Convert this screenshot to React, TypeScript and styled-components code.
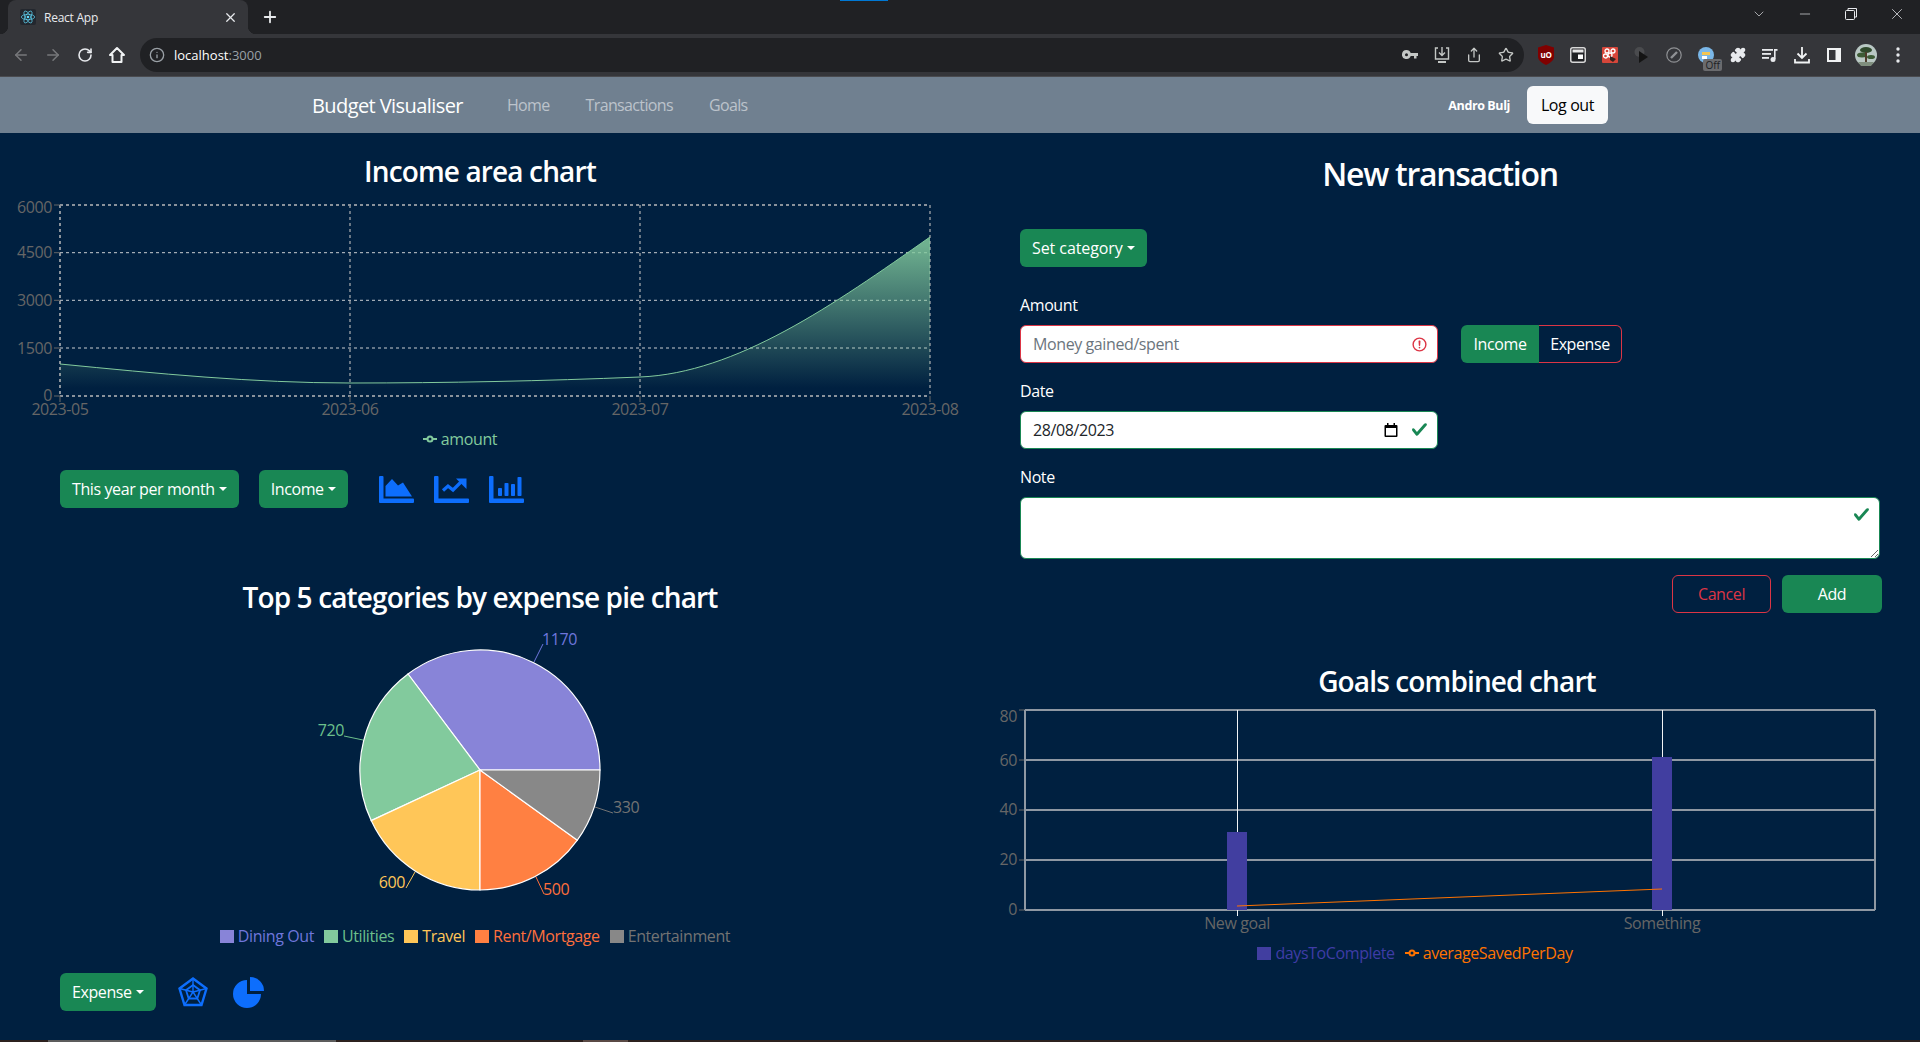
import styled, { createGlobalStyle } from "styled-components";
import {
    ArrowLeft,
    ArrowRight,
    RotateCw,
    Info,
    Share,
    Star,
    Puzzle,
    X,
    Plus,
    ChevronDown,
    Minus,
} from "lucide-react";

const GlobalStyle = createGlobalStyle`
    * {
        box-sizing: border-box;
    }
    html, body {
        margin: 0;
        height: 1042px;
        overflow: hidden;
        background: #002040;
        color: #fff;
        font-family: "Open Sans", "Noto Sans", sans-serif;
        font-size: 16px;
        letter-spacing: -0.025em;
    }
`;

const Page = styled.div`
    position: relative;
    height: 1042px;
    display: flex;
    flex-direction: column;
    overflow: hidden;
`;

/* browser chrome */

const CaptureMark = styled.div`
    position: absolute;
    top: 0;
    left: 840px;
    width: 48px;
    height: 1px;
    background: #0078d4;
`;

const TabStrip = styled.div`
    height: 34px;
    background: #202124;
    display: flex;
    align-items: center;
    padding-left: 8px;
    color: #e8eaed;
`;

const Tab = styled.div`
    width: 240px;
    height: 34px;
    background: #35363a;
    border-radius: 8px 8px 0 0;
    display: flex;
    align-items: center;
    padding: 0 10px 0 12px;
    gap: 8px;
    font-size: 12px;
    position: relative;

    &::before,
    &::after {
        content: "";
        position: absolute;
        bottom: 0;
        width: 8px;
        height: 8px;
    }
    &::before {
        left: -8px;
        background: radial-gradient(circle at 0 0, transparent 8px, #35363a 8.5px);
    }
    &::after {
        right: -8px;
        background: radial-gradient(circle at 100% 0, transparent 8px, #35363a 8.5px);
    }
`;

const TabTitle = styled.span`
    flex: 1;
    letter-spacing: -0.02em;
`;

const NewTab = styled.div`
    margin-left: 13px;
    display: flex;
`;

const WindowControls = styled.div`
    margin-left: auto;
    display: flex;
    align-items: center;
    margin-top: -6px;
`;

const WindowButton = styled.div`
    width: 46px;
    display: flex;
    justify-content: center;
`;

const Toolbar = styled.div`
    height: 43px;
    background: #35363a;
    border-bottom: 1px solid #4a4b4f;
    display: flex;
    align-items: center;
    padding-left: 5px;
`;

const IconCell = styled.div<{ $dim?: boolean }>`
    width: 32px;
    height: 32px;
    flex: none;
    display: flex;
    align-items: center;
    justify-content: center;
    color: ${(p) => (p.$dim ? "#77787b" : "#e8eaed")};
    position: relative;
`;

const Omnibox = styled.div`
    margin-left: 7px;
    width: 1384px;
    height: 34px;
    border-radius: 17px;
    background: #202124;
    display: flex;
    align-items: center;
    padding: 0 2px 0 9px;
    font-size: 13px;
`;

const InfoSlot = styled.div`
    width: 16px;
    display: flex;
    color: #9aa0a6;
    margin-right: 9px;
`;

const Host = styled.span`
    color: #fff;
    flex: 1;
    letter-spacing: 0;
`;

const Port = styled.span`
    color: #9aa0a6;
`;

const Extensions = styled.div`
    display: flex;
    margin-left: 6px;
`;

const OffBadge = styled.span`
    position: absolute;
    right: 0;
    bottom: 0;
    background: #6a6b6e;
    color: #202124;
    font-size: 10px;
    line-height: 12px;
    padding: 0 2px;
    border-radius: 2px;
    letter-spacing: 0;
`;

/* navbar */

const Navbar = styled.nav`
    height: 56px;
    background: #708090;
    display: flex;
    align-items: center;
    padding: 0 312px;
`;

const Brand = styled.span`
    font-size: 20px;
    color: #fff;
    margin-right: 44px;
    letter-spacing: -0.029em;
`;

const NavLinks = styled.div`
    display: flex;
    gap: 36px;
    flex: 1;
`;

const NavLink = styled.span`
    color: #bcc3cb;
    letter-spacing: -0.04em;
`;

const UserName = styled.span`
    font-size: 12.5px;
    font-weight: 700;
    margin-right: 17px;
`;

const LogOut = styled.button`
    width: 81px;
    height: 38px;
    background: #f8f9fa;
    color: #000;
    border: 0;
    border-radius: 6px;
    font: inherit;
    letter-spacing: inherit;
`;

/* content */

const Main = styled.main`
    flex: 1;
    display: grid;
    grid-template-columns: 960px 960px;
`;

const LeftColumn = styled.section`
    display: flex;
    flex-direction: column;
    padding-top: 21px;
`;

const RightColumn = styled.section`
    display: flex;
    flex-direction: column;
    padding: 22px 38px 0 60px;
`;

const ChartTitle = styled.h3<{ $shift?: number; $above?: number; $below?: number }>`
    margin: ${(p) => p.$above ?? 0}px 0 ${(p) => p.$below ?? 0}px;
    font-size: 28px;
    line-height: 34px;
    font-weight: 600;
    text-align: center;
    letter-spacing: -0.031em;
    padding-left: ${(p) => p.$shift ?? 0}px;
`;

const FormTitle = styled.h2`
    margin: 0 -38px 36px -60px;
    font-size: 32px;
    line-height: 38px;
    font-weight: 600;
    text-align: center;
    letter-spacing: -0.04em;
`;

const ChartSvg = styled.svg`
    display: block;
    flex: none;

    text {
        font-size: 16px;
        fill: #666;
    }
`;

const Legend = styled.div<{ $shift: number }>`
    display: flex;
    justify-content: center;
    align-items: center;
    gap: 10px;
    height: 24px;
    padding-right: ${(p) => p.$shift}px;
`;

const LegendItem = styled.span<{ $color: string }>`
    display: flex;
    align-items: center;
    gap: 4px;
    color: ${(p) => p.$color};
`;

const Swatch = styled.i<{ $color: string }>`
    width: 14px;
    height: 13px;
    background: ${(p) => p.$color};
`;

const Controls = styled.div<{ $top: number }>`
    display: flex;
    align-items: center;
    margin-top: ${(p) => p.$top}px;
    padding-left: 60px;
`;

const GreenButton = styled.button`
    height: 38px;
    padding: 0 12px;
    background: #198754;
    color: #fff;
    border: 0;
    border-radius: 6px;
    font: inherit;
    letter-spacing: inherit;
    flex: none;
`;

const CaretButton = styled(GreenButton)`
    display: inline-flex;
    align-items: center;
    margin-right: 20px;

    &::after {
        content: "";
        margin-left: 4px;
        border-top: 4.8px solid #fff;
        border-left: 4.8px solid transparent;
        border-right: 4.8px solid transparent;
    }
`;

const SetCategory = styled(CaretButton)`
    align-self: flex-start;
    margin-right: 0;
    letter-spacing: -0.005em;
`;

const IconRow = styled.div<{ $gap: number; $left: number }>`
    display: flex;
    align-items: center;
    gap: ${(p) => p.$gap}px;
    margin-left: ${(p) => p.$left}px;
    color: #0d6efd;
`;

const Label = styled.label<{ $top: number }>`
    display: block;
    height: 24px;
    line-height: 24px;
    margin: ${(p) => p.$top}px 0 8px;
`;

const FieldRow = styled.div`
    display: flex;
    gap: 23px;
`;

const Field = styled.div<{ $wide?: boolean }>`
    position: relative;
    width: ${(p) => (p.$wide ? "860px" : "418px")};
`;

const TextInput = styled.input<{ $valid: boolean }>`
    display: block;
    width: 100%;
    height: 38px;
    padding: 0 12px;
    background: #fff;
    color: #212529;
    border: 1px solid ${(p) => (p.$valid ? "#198754" : "#dc3545")};
    border-radius: 6px;
    font: inherit;
    letter-spacing: inherit;

    &::placeholder {
        color: #6c757d;
    }
`;

const NoteInput = styled.textarea`
    display: block;
    width: 100%;
    height: 62px;
    background: #fff;
    border: 1px solid #198754;
    border-radius: 6px;
    resize: vertical;
`;

const FieldIcon = styled.svg<{ $top: number }>`
    position: absolute;
    right: 10px;
    top: ${(p) => p.$top}px;
    width: 17px;
    height: 17px;
`;

const CalendarIcon = styled.svg`
    position: absolute;
    right: 40px;
    top: 12px;
    width: 14px;
    height: 14px;
`;

const ToggleGroup = styled.div`
    display: flex;
    height: 38px;
`;

const ToggleOn = styled.button`
    width: 78px;
    background: #198754;
    color: #fff;
    border: 0;
    border-radius: 6px 0 0 6px;
    font: inherit;
    letter-spacing: inherit;
`;

const ToggleOff = styled.button`
    width: 83px;
    background: transparent;
    color: #fff;
    border: 1px solid #dc3545;
    border-left: 0;
    border-radius: 0 6px 6px 0;
    font: inherit;
    letter-spacing: inherit;
`;

const FormActions = styled.div`
    display: flex;
    justify-content: flex-end;
    gap: 11px;
    margin: 16px 0 0 0;
`;

const CancelButton = styled.button`
    width: 99px;
    height: 38px;
    background: transparent;
    color: #dc3545;
    border: 1px solid #dc3545;
    border-radius: 6px;
    font: inherit;
    letter-spacing: inherit;
`;

const AddButton = styled(GreenButton)`
    width: 100px;
`;

const GoalsBlock = styled.div`
    margin: 51px -38px 0 -60px;
`;

const ScrollTrack = styled.div`
    position: absolute;
    left: 0;
    right: 0;
    bottom: 0;
    height: 2px;
    background: #2c211e;
`;

const ScrollThumb = styled.div<{ $left: number; $width: number; $color: string }>`
    position: absolute;
    top: 0;
    bottom: 0;
    left: ${(p) => p.$left}px;
    width: ${(p) => p.$width}px;
    background: ${(p) => p.$color};
`;

/* small drawings */

function ReactLogo() {
    return (
        <svg width="16" height="16" viewBox="-12 -12 24 24">
            <rect x="-12" y="-12" width="24" height="24" rx="3" fill="#23272e" />
            <circle r="2" fill="#61dafb" />
            <g fill="none" stroke="#61dafb" strokeWidth="1">
                <ellipse rx="10" ry="4" />
                <ellipse rx="10" ry="4" transform="rotate(60)" />
                <ellipse rx="10" ry="4" transform="rotate(120)" />
            </g>
        </svg>
    );
}

function HomeIcon() {
    return (
        <svg width="18" height="18" viewBox="0 0 18 18" fill="none" stroke="#f1f3f4" strokeWidth="2" strokeLinejoin="round">
            <path d="M9 2L2 9h2.500v7h9V9H16z" />
        </svg>
    );
}

function KeyIcon() {
    return (
        <svg width="16" height="10" viewBox="0 0 16 10" fill="#c4c7c5">
            <path d="M4.500 0a4.500 4.500 0 0 1 4.200 3H16v3h-1.500v2.500h-2.500V6H8.700A4.500 4.500 0 1 1 4.500 0zm0 3.200a1.500 1.500 0 1 0 0 3 1.500 1.500 0 0 0 0-3z" />
        </svg>
    );
}

function InstallIcon() {
    return (
        <svg width="18" height="18" viewBox="0 0 18 18" fill="none" stroke="#c4c7c5" strokeWidth="1.4">
            <path d="M5 2H2.500v11h13V2H13" />
            <path d="M9 1v8M6 6.500l3 3 3-3" />
            <path d="M5 16h8" strokeWidth="2" />
        </svg>
    );
}

function UBlockIcon() {
    return (
        <svg width="18" height="20" viewBox="0 0 18 20">
            <path d="M9 0l8 2.500v9c0 4-4 6.500-8 8.500-4-2-8-4.500-8-8.500v-9z" fill="#800000" />
            <text x="9" y="12.500" fontSize="8" fill="#fff" textAnchor="middle" fontWeight="700">
                uO
            </text>
        </svg>
    );
}

function PipIcon() {
    return (
        <svg width="16" height="16" viewBox="0 0 16 16">
            <rect x="0.750" y="0.750" width="14.500" height="14.500" rx="2" fill="#202124" stroke="#d8d8d8" strokeWidth="1.500" />
            <rect x="2.500" y="2.500" width="11" height="3" fill="#e8e8e8" />
            <rect x="8" y="7.500" width="5" height="4.500" fill="#fff" />
        </svg>
    );
}

function FoxIcon() {
    return (
        <svg width="16" height="16" viewBox="0 0 16 16">
            <rect width="16" height="16" rx="1" fill="#d6463a" />
            <g fill="none" stroke="#fff" strokeWidth="1.300">
                <circle cx="5" cy="4" r="2" />
                <circle cx="11" cy="4" r="2" />
                <circle cx="3.500" cy="9" r="2" />
                <circle cx="8" cy="8" r="2" />
            </g>
            <path d="M8 9l6 3-3 3-3-2z" fill="#33231f" />
        </svg>
    );
}

function PlayIcon() {
    return (
        <svg width="16" height="16" viewBox="0 0 16 16">
            <circle cx="5.500" cy="5" r="5" fill="#4a4b4e" />
            <path d="M5 4l9 6-9 6z" fill="#141414" />
        </svg>
    );
}

function CompassIcon() {
    return (
        <svg width="16" height="16" viewBox="0 0 16 16" fill="none" stroke="#8f9194">
            <circle cx="8" cy="8" r="7.200" strokeWidth="1.200" />
            <path d="M5 11l6-6" strokeWidth="2.400" />
        </svg>
    );
}

function FlagIcon() {
    return (
        <svg width="16" height="16" viewBox="0 0 16 16">
            <circle cx="8" cy="8" r="8" fill="#7ab7e8" />
            <rect x="4" y="5" width="8" height="3" fill="#f4c552" />
            <rect x="4" y="9" width="5" height="3" fill="#fff" />
        </svg>
    );
}

function QueueIcon() {
    return (
        <svg width="16" height="16" viewBox="0 0 16 16" fill="#e8eaed">
            <rect x="0" y="2" width="11" height="1.800" />
            <rect x="0" y="6" width="9" height="1.800" />
            <rect x="0" y="10" width="7" height="1.800" />
            <rect x="12" y="2" width="3.500" height="1.800" />
            <rect x="12" y="2" width="1.600" height="10" />
            <circle cx="11" cy="12.500" r="2.500" />
        </svg>
    );
}

function PanelIcon() {
    return (
        <svg width="14" height="14" viewBox="0 0 14 14">
            <rect width="14" height="14" fill="#f1f3f4" />
            <rect x="2" y="2" width="6.500" height="10" fill="#35363a" />
        </svg>
    );
}

function DownloadTray() {
    return (
        <svg width="16" height="18" viewBox="0 0 16 18" fill="none" stroke="#f1f3f4" strokeWidth="1.800">
            <path d="M8 1v11M3.500 7.500L8 12l4.500-4.500M1 13v3.500h14V13" />
        </svg>
    );
}

function Avatar() {
    return (
        <svg width="22" height="22" viewBox="0 0 22 22">
            <circle cx="11" cy="11" r="11" fill="#b9c8c4" />
            <ellipse cx="11" cy="6" rx="6" ry="3" fill="#2f4a2c" />
            <ellipse cx="7" cy="11" rx="5" ry="2.500" fill="#3d5c36" />
            <ellipse cx="16" cy="13" rx="4" ry="2" fill="#3d5c36" />
            <rect x="10" y="8" width="2" height="10" fill="#4d3c2b" />
            <path d="M3 18h16l-3 4H6z" fill="#7f8f7e" />
        </svg>
    );
}

function DotsIcon() {
    return (
        <svg width="4" height="16" viewBox="0 0 4 16" fill="#e8eaed">
            <circle cx="2" cy="2" r="1.700" />
            <circle cx="2" cy="8" r="1.700" />
            <circle cx="2" cy="14" r="1.700" />
        </svg>
    );
}

function RestoreIcon() {
    return (
        <svg width="12" height="12" viewBox="0 0 12 12" fill="none" stroke="#e8eaed">
            <rect x="0.500" y="2.500" width="9" height="9" rx="1" />
            <path d="M3 2.500V0.500h8.500V9H9.500" />
        </svg>
    );
}

const KIND_AXIS =
    "M1 0h2.500a1 1 0 0 1 1 1v21.500H34a1 1 0 0 1 1 1V26a1 1 0 0 1-1 1H1a1 1 0 0 1-1-1V1a1 1 0 0 1 1-1z";

function AreaKindIcon() {
    return (
        <svg width="35" height="27" viewBox="0 0 35 27" fill="currentColor">
            <path d={KIND_AXIS} />
            <path d="M6.500 20.500V10l6.500-7 6 6.500 5-3 9 14z" />
        </svg>
    );
}

function LineKindIcon() {
    return (
        <svg width="35" height="27" viewBox="0 0 35 27" fill="currentColor">
            <path d={KIND_AXIS} />
            <path d="M9 14.500l5-4.500 5 4 8-8" fill="none" stroke="currentColor" strokeWidth="3.200" />
            <path d="M22 2.500h10.500V13z" />
        </svg>
    );
}

function BarKindIcon() {
    return (
        <svg width="35" height="27" viewBox="0 0 35 27" fill="currentColor">
            <path d={KIND_AXIS} />
            <rect x="9" y="12" width="4" height="8" rx="0.800" />
            <rect x="15.500" y="7" width="4" height="13" rx="0.800" />
            <rect x="22" y="8" width="4" height="12" rx="0.800" />
            <rect x="28.500" y="1" width="4" height="19" rx="0.800" />
        </svg>
    );
}

function RadarKindIcon() {
    return (
        <svg width="30" height="30" viewBox="0 0 30 30" fill="none" stroke="currentColor">
            <path d="M15 1.500L28.500 11.500 23.500 28H6.500L1.500 11.500z" strokeWidth="2.400" />
            <path d="M15 8l7 5.200-2.700 8.300h-8.600L8 13.200z" strokeWidth="1.800" />
            <path d="M15 1.500V15M28.500 11.500L15 15M23.500 28L15 15M6.500 28L15 15M1.500 11.500L15 15" strokeWidth="1.400" />
        </svg>
    );
}

function PieKindIcon() {
    return (
        <svg width="31" height="31" viewBox="0 0 31 31" fill="currentColor">
            <path d="M14 3A14 14 0 1 0 28 17H14z" />
            <path d="M17 0A14 14 0 0 1 31 14H17z" />
        </svg>
    );
}

/* charts, drawn with page coordinates through the viewBox */

const AREA_LEFT = 60;
const AREA_RIGHT = 930;
const AREA_TOP = 205;
const AREA_BOTTOM = 396;
const AREA_ROWS = [
    { label: "6000", y: 205, textY: 208 },
    { label: "4500", y: 252.7, textY: 253 },
    { label: "3000", y: 300.3, textY: 301 },
    { label: "1500", y: 348, textY: 349 },
    { label: "0", y: 396, textY: 396 },
];
const AREA_COLUMNS = [
    { label: "2023-05", x: 60 },
    { label: "2023-06", x: 350 },
    { label: "2023-07", x: 640 },
    { label: "2023-08", x: 930 },
];
const AREA_CURVE =
    "M60 364C156.700 373.500 253.300 383 350 383C446.700 383 543.300 381 640 377C736.700 373 833.300 305 930 237";

function AreaChart() {
    return (
        <ChartSvg width="960" height="233" viewBox="0 194 960 233">
            <defs>
                <linearGradient id="areaFill" x1="0" y1="0" x2="0" y2="1">
                    <stop offset="5%" stopColor="#82ca9d" stopOpacity="0.85" />
                    <stop offset="95%" stopColor="#82ca9d" stopOpacity="0" />
                </linearGradient>
            </defs>
            {AREA_ROWS.map((row, i) => {
                const outer = i === 0 || i === AREA_ROWS.length - 1;
                return (
                    <g key={row.label}>
                        <line
                            x1={AREA_LEFT}
                            x2={AREA_RIGHT}
                            y1={row.y}
                            y2={row.y}
                            stroke={outer ? "#8a929b" : "#c9cdd1"}
                            strokeWidth={outer ? 2 : 1}
                            strokeDasharray="3 3"
                        />
                        <line x1={AREA_LEFT - 6} x2={AREA_LEFT} y1={row.y} y2={row.y} stroke="#666" />
                        <text x={AREA_LEFT - 8} y={row.textY + 5} textAnchor="end">
                            {row.label}
                        </text>
                    </g>
                );
            })}
            {AREA_COLUMNS.map((col, i) => {
                return (
                    <g key={col.label}>
                        <line
                            x1={col.x}
                            x2={col.x}
                            y1={AREA_TOP}
                            y2={AREA_BOTTOM}
                            stroke="#8a929b"
                            strokeWidth={i === 0 ? 2 : 1.5}
                            strokeDasharray="3 3"
                        />
                        <line x1={col.x} x2={col.x} y1={AREA_BOTTOM} y2={AREA_BOTTOM + 6} stroke="#666" />
                        <text x={col.x} y={415} textAnchor="middle">
                            {col.label}
                        </text>
                    </g>
                );
            })}
            <path d={`${AREA_CURVE}V${AREA_BOTTOM}H${AREA_LEFT}Z`} fill="url(#areaFill)" />
            <path d={AREA_CURVE} fill="none" stroke="#82ca9d" />
        </ChartSvg>
    );
}

const PIE_X = 480;
const PIE_Y = 770;
const PIE_R = 120;
const PIE_SLICES = [
    { name: "Dining Out", value: 1170, fill: "#8884d8", text: "#6f76dc" },
    { name: "Utilities", value: 720, fill: "#82ca9d", text: "#6cc08c" },
    { name: "Travel", value: 600, fill: "#ffc658", text: "#ffc658" },
    { name: "Rent/Mortgage", value: 500, fill: "#ff8042", text: "#ff6f3c" },
    { name: "Entertainment", value: 330, fill: "#888888", text: "#737373" },
];
const PIE_LABELS = [
    { value: "1170", color: "#6f76dc", line: "M534 662L543 644", x: 542, y: 645, anchor: "start" },
    { value: "720", color: "#6cc08c", line: "M363 740L344 736", x: 344, y: 736, anchor: "end" },
    { value: "600", color: "#ffc658", line: "M415 872L406 888", x: 405, y: 888, anchor: "end" },
    { value: "500", color: "#ff6f3c", line: "M536 877L544 894", x: 543, y: 895, anchor: "start" },
    { value: "330", color: "#737373", line: "M595 807L613 813", x: 613, y: 813, anchor: "start" },
];

function slicePath(from: number, to: number) {
    const point = (deg: number) => {
        const rad = (deg * Math.PI) / 180;
        return `${PIE_X + PIE_R * Math.cos(rad)} ${PIE_Y - PIE_R * Math.sin(rad)}`;
    };
    const large = to - from > 180 ? 1 : 0;
    return `M${PIE_X} ${PIE_Y}L${point(from)}A${PIE_R} ${PIE_R} 0 ${large} 0 ${point(to)}Z`;
}

function PieChart() {
    const total = PIE_SLICES.reduce((sum, s) => sum + s.value, 0);
    let angle = 0;
    return (
        <ChartSvg width="960" height="304" viewBox="0 620 960 304">
            {PIE_SLICES.map((s) => {
                const from = angle;
                angle += (s.value / total) * 360;
                return <path key={s.name} d={slicePath(from, angle)} fill={s.fill} stroke="#fff" strokeWidth="1.200" />;
            })}
            {PIE_LABELS.map((l) => (
                <g key={l.value}>
                    <path d={l.line} stroke={l.color} fill="none" />
                    <text x={l.x} y={l.y} textAnchor={l.anchor as "start" | "end"} style={{ fill: l.color }}>
                        {l.value}
                    </text>
                </g>
            ))}
        </ChartSvg>
    );
}

const GOAL_LEFT = 1025;
const GOAL_RIGHT = 1875;
const GOAL_ROWS = [
    { label: "80", y: 710, textY: 717 },
    { label: "60", y: 760, textY: 761 },
    { label: "40", y: 810, textY: 810 },
    { label: "20", y: 860, textY: 860 },
    { label: "0", y: 910, textY: 910 },
];
const GOAL_BARS = [
    { label: "New goal", x: 1237, top: 832 },
    { label: "Something", x: 1662, top: 757 },
];

function GoalsChart() {
    return (
        <ChartSvg width="960" height="243" viewBox="960 698 960 243">
            {GOAL_ROWS.map((row) => (
                <g key={row.label}>
                    <line x1={GOAL_LEFT} x2={GOAL_RIGHT} y1={row.y} y2={row.y} stroke="#8f98a3" strokeWidth="2" />
                    <line x1={GOAL_LEFT - 6} x2={GOAL_LEFT} y1={row.y} y2={row.y} stroke="#666" />
                    <text x={GOAL_LEFT - 8} y={row.textY + 5} textAnchor="end">
                        {row.label}
                    </text>
                </g>
            ))}
            <line x1={GOAL_LEFT} x2={GOAL_LEFT} y1={710} y2={910} stroke="#8f98a3" strokeWidth="2" />
            <line x1={GOAL_RIGHT} x2={GOAL_RIGHT} y1={710} y2={910} stroke="#8f98a3" strokeWidth="2" />
            {GOAL_BARS.map((bar) => (
                <g key={bar.label}>
                    <line x1={bar.x + 0.5} x2={bar.x + 0.5} y1={710} y2={916} stroke="#f2f4f6" />
                    <rect x={bar.x - 10} y={bar.top} width="20" height={910 - bar.top} fill="#413ea0" />
                    <text x={bar.x} y={929} textAnchor="middle">
                        {bar.label}
                    </text>
                </g>
            ))}
            <line x1={1237} y1={906} x2={1662} y2={889} stroke="#ff7300" />
        </ChartSvg>
    );
}

function LineMarker({ color }: { color: string }) {
    return (
        <svg width="14" height="14" viewBox="0 0 14 14" fill="none" stroke={color} strokeWidth="2">
            <path d="M0 7h14" />
            <circle cx="7" cy="7" r="2.500" fill="#002040" />
        </svg>
    );
}

function CheckMark({ top }: { top: number }) {
    return (
        <FieldIcon $top={top} viewBox="0 0 8 8">
            <path
                fill="#198754"
                d="M2.300 6.730.6 4.530c-.4-1.040.46-1.400 1.100-.8l1.100 1.400 3.400-3.800c.6-.63 1.600-.27 1.200.7l-4 4.600c-.43.5-.8.4-1.100.1z"
            />
        </FieldIcon>
    );
}

function App() {
    return (
        <Page>
            <GlobalStyle />
            <CaptureMark />
            <TabStrip>
                <Tab>
                    <ReactLogo />
                    <TabTitle>React App</TabTitle>
                    <X size={15} />
                </Tab>
                <NewTab>
                    <Plus size={18} strokeWidth={2.4} />
                </NewTab>
                <WindowControls>
                    <WindowButton>
                        <ChevronDown size={16} strokeWidth={1} />
                    </WindowButton>
                    <WindowButton>
                        <Minus size={16} strokeWidth={1} />
                    </WindowButton>
                    <WindowButton>
                        <RestoreIcon />
                    </WindowButton>
                    <WindowButton>
                        <X size={18} strokeWidth={1} />
                    </WindowButton>
                </WindowControls>
            </TabStrip>
            <Toolbar>
                <IconCell $dim>
                    <ArrowLeft size={18} />
                </IconCell>
                <IconCell $dim>
                    <ArrowRight size={18} />
                </IconCell>
                <IconCell>
                    <RotateCw size={16} strokeWidth={2.4} />
                </IconCell>
                <IconCell>
                    <HomeIcon />
                </IconCell>
                <Omnibox>
                    <InfoSlot>
                        <Info size={16} />
                    </InfoSlot>
                    <Host>
                        localhost<Port>:3000</Port>
                    </Host>
                    <IconCell>
                        <KeyIcon />
                    </IconCell>
                    <IconCell>
                        <InstallIcon />
                    </IconCell>
                    <IconCell>
                        <Share size={16} color="#c4c7c5" />
                    </IconCell>
                    <IconCell>
                        <Star size={16} color="#c4c7c5" strokeWidth={2} />
                    </IconCell>
                </Omnibox>
                <Extensions>
                    <IconCell>
                        <UBlockIcon />
                    </IconCell>
                    <IconCell>
                        <PipIcon />
                    </IconCell>
                    <IconCell>
                        <FoxIcon />
                    </IconCell>
                    <IconCell>
                        <PlayIcon />
                    </IconCell>
                    <IconCell>
                        <CompassIcon />
                    </IconCell>
                    <IconCell>
                        <FlagIcon />
                        <OffBadge>Off</OffBadge>
                    </IconCell>
                    <IconCell>
                        <Puzzle size={16} fill="#e8eaed" />
                    </IconCell>
                    <IconCell>
                        <QueueIcon />
                    </IconCell>
                    <IconCell>
                        <DownloadTray />
                    </IconCell>
                    <IconCell>
                        <PanelIcon />
                    </IconCell>
                    <IconCell>
                        <Avatar />
                    </IconCell>
                    <IconCell>
                        <DotsIcon />
                    </IconCell>
                </Extensions>
            </Toolbar>
            <Navbar>
                <Brand>Budget Visualiser</Brand>
                <NavLinks>
                    <NavLink>Home</NavLink>
                    <NavLink>Transactions</NavLink>
                    <NavLink>Goals</NavLink>
                </NavLinks>
                <UserName>Andro Bulj</UserName>
                <LogOut>Log out</LogOut>
            </Navbar>
            <Main>
                <LeftColumn>
                    <ChartTitle $below={6}>Income area chart</ChartTitle>
                    <AreaChart />
                    <Legend $shift={40}>
                        <LegendItem $color="#82ca9d">
                            <LineMarker color="#82ca9d" />
                            amount
                        </LegendItem>
                    </Legend>
                    <Controls $top={19}>
                        <CaretButton>This year per month</CaretButton>
                        <CaretButton>Income</CaretButton>
                        <IconRow $gap={20} $left={11}>
                            <AreaKindIcon />
                            <LineKindIcon />
                            <BarKindIcon />
                        </IconRow>
                    </Controls>
                    <ChartTitle $above={72} $below={6}>
                        Top 5 categories by expense pie chart
                    </ChartTitle>
                    <PieChart />
                    <Legend $shift={10}>
                        {PIE_SLICES.map((s) => (
                            <LegendItem key={s.name} $color={s.text}>
                                <Swatch $color={s.fill} />
                                {s.name}
                            </LegendItem>
                        ))}
                    </Legend>
                    <Controls $top={25}>
                        <CaretButton>Expense</CaretButton>
                        <IconRow $gap={25} $left={2}>
                            <RadarKindIcon />
                            <PieKindIcon />
                        </IconRow>
                    </Controls>
                </LeftColumn>
                <RightColumn>
                    <FormTitle>New transaction</FormTitle>
                    <SetCategory>Set category</SetCategory>
                    <Label $top={26}>Amount</Label>
                    <FieldRow>
                        <Field>
                            <TextInput $valid={false} placeholder="Money gained/spent" />
                            <FieldIcon $top={11} viewBox="0 0 12 12" fill="none" stroke="#dc3545">
                                <circle cx="6" cy="6" r="4.500" />
                                <path strokeLinejoin="round" d="M5.800 3.600h.4L6 6.500z" />
                                <circle cx="6" cy="8.200" r=".6" fill="#dc3545" stroke="none" />
                            </FieldIcon>
                        </Field>
                        <ToggleGroup>
                            <ToggleOn>Income</ToggleOn>
                            <ToggleOff>Expense</ToggleOff>
                        </ToggleGroup>
                    </FieldRow>
                    <Label $top={16}>Date</Label>
                    <Field>
                        <TextInput $valid readOnly value="28/08/2023" />
                        <CalendarIcon viewBox="0 0 14 14">
                            <path d="M3 0h1.500v2h5V0H11v2h1.500a1 1 0 0 1 1 1v10a1 1 0 0 1-1 1h-11a1 1 0 0 1-1-1V3a1 1 0 0 1 1-1H3z" fill="#000" />
                            <rect x="2" y="5" width="10" height="7.500" fill="#fff" />
                        </CalendarIcon>
                        <CheckMark top={10} />
                    </Field>
                    <Label $top={16}>Note</Label>
                    <Field $wide>
                        <NoteInput />
                        <CheckMark top={9} />
                    </Field>
                    <FormActions>
                        <CancelButton>Cancel</CancelButton>
                        <AddButton>Add</AddButton>
                    </FormActions>
                    <GoalsBlock>
                        <ChartTitle $shift={34}>Goals combined chart</ChartTitle>
                        <GoalsChart />
                        <Legend $shift={50}>
                            <LegendItem $color="#3f3ca6">
                                <Swatch $color="#413ea0" />
                                daysToComplete
                            </LegendItem>
                            <LegendItem $color="#ff7300">
                                <LineMarker color="#ff7300" />
                                averageSavedPerDay
                            </LegendItem>
                        </Legend>
                    </GoalsBlock>
                </RightColumn>
            </Main>
            <ScrollTrack>
                <ScrollThumb $left={48} $width={288} $color="#5c5c5c" />
                <ScrollThumb $left={583} $width={45} $color="#5a4a45" />
            </ScrollTrack>
        </Page>
    );
}

export default App;
